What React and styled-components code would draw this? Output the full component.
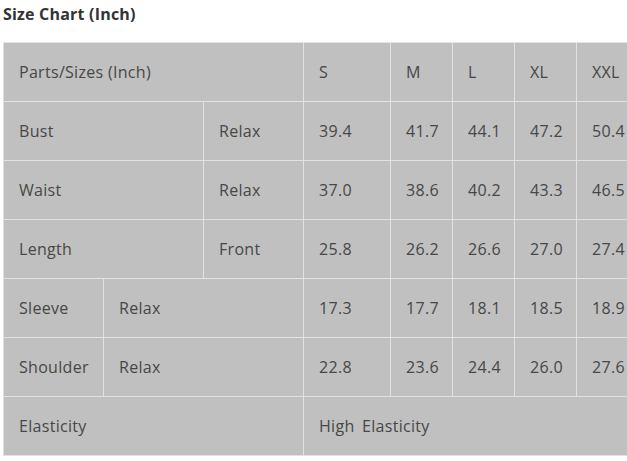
import React from "react";
import styled, { createGlobalStyle } from "styled-components";

const Global = createGlobalStyle`
  html, body { margin: 0; padding: 0; overflow: hidden; background: #fff; }
  body { font-family: "Open Sans", "Liberation Sans", sans-serif; }
`;

const Page = styled.div`
  padding: 3px 0 0 3px;
  overflow: hidden;
`;

const Title = styled.h3`
  margin: 0;
  height: 39px;
  font-size: 16px;
  line-height: 22px;
  font-weight: 700;
  color: #333;
  letter-spacing: 0.2px;
`;

const Table = styled.table`
  border-collapse: collapse;
  table-layout: fixed;
  width: 635px;
  background: #c0c0c0;
  border: 1px solid #e2e2e2;
`;

const Col = styled.col`
  width: ${(p) => p.$w}px;
`;

const Cell = styled.td`
  height: 58px;
  padding: 0 0 0 15px;
  border: 1px solid #e2e2e2;
  color: #474747;
  font-size: 16px;
  font-weight: 400;
  letter-spacing: 0.3px;
  text-align: left;
  vertical-align: middle;
  white-space: nowrap;
  overflow: hidden;
  word-spacing: ${(p) => (p.$wide ? "3px" : "0")};
`;

const colWidths = [100, 100, 100, 87, 62, 62, 62, 62];
const sizes = ["S", "M", "L", "XL", "XXL"];
const rows1 = [
  ["Bust", "Relax", ["39.4", "41.7", "44.1", "47.2", "50.4"]],
  ["Waist", "Relax", ["37.0", "38.6", "40.2", "43.3", "46.5"]],
  ["Length", "Front", ["25.8", "26.2", "26.6", "27.0", "27.4"]],
];
const rows2 = [
  ["Sleeve", "Relax", ["17.3", "17.7", "18.1", "18.5", "18.9"]],
  ["Shoulder", "Relax", ["22.8", "23.6", "24.4", "26.0", "27.6"]],
];

export default function App() {
  return (
    <Page>
      <Global />
      <Title>Size Chart (Inch)</Title>
      <Table>
        <colgroup>
          {colWidths.map((w, i) => (
            <Col key={i} $w={w} />
          ))}
        </colgroup>
        <tbody>
          <tr>
            <Cell colSpan={3}>Parts/Sizes (Inch)</Cell>
            {sizes.map((s) => (
              <Cell key={s}>{s}</Cell>
            ))}
          </tr>
          {rows1.map(([a, b, v]) => (
            <tr key={a}>
              <Cell colSpan={2}>{a}</Cell>
              <Cell>{b}</Cell>
              {v.map((x, i) => (
                <Cell key={i}>{x}</Cell>
              ))}
            </tr>
          ))}
          {rows2.map(([a, b, v]) => (
            <tr key={a}>
              <Cell>{a}</Cell>
              <Cell colSpan={2}>{b}</Cell>
              {v.map((x, i) => (
                <Cell key={i}>{x}</Cell>
              ))}
            </tr>
          ))}
          <tr>
            <Cell colSpan={3}>Elasticity</Cell>
            <Cell colSpan={5} $wide>High Elasticity</Cell>
          </tr>
        </tbody>
      </Table>
    </Page>
  );
}
